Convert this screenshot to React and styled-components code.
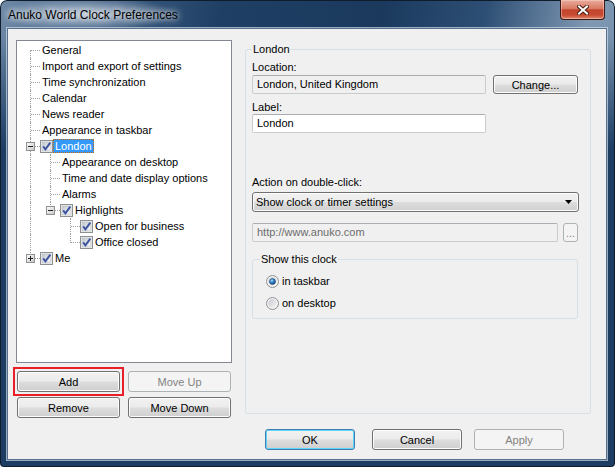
import React from 'react';
import styled, { createGlobalStyle, css } from 'styled-components';

const GlobalStyle = createGlobalStyle`
  html, body { margin: 0; padding: 0; background: #ffffff; }
  body {
    font-family: "Segoe UI", "Liberation Sans", Arial, sans-serif;
    font-size: 11px;
    color: #000;
  }
`;

const Window = styled.div`
  box-sizing: border-box;
  width: 615px;
  height: 467px;
  padding: 0 8px 7px 7px;
  display: flex;
  flex-direction: column;
  border-radius: 7px 7px 4px 4px;
  box-shadow: inset 0 0 0 1px #0e1c2c;
  background:
    radial-gradient(ellipse 115px 24px at 88px 14px, rgba(255, 255, 255, 0.6), rgba(255, 255, 255, 0) 75%),
    linear-gradient(to bottom, rgba(29, 61, 99, 0) 0, rgba(29, 61, 99, 0) 36px, #1d3d63 150px),
    linear-gradient(100deg, #6f8aa6 0%, #43648a 12%, #1f3f64 32%, #1a395d 55%, #2e4f75 70%, #8099b3 85%, #6582a0 100%);
`;

const TitleBar = styled.div`
  display: flex;
  justify-content: space-between;
  align-items: flex-start;
  height: 28px;
  flex: none;
`;

const TitleText = styled.div`
  padding: 8px 0 0 1px;
  font-size: 12px;
  line-height: 14px;
  color: #000;
  text-shadow: 0 0 6px #fff, 0 0 10px rgba(255, 255, 255, 0.8);
`;

const CloseButton = styled.div`
  box-sizing: border-box;
  width: 45px;
  height: 20px;
  margin-right: 2px;
  display: flex;
  align-items: center;
  justify-content: center;
  border: 1px solid #3d1a14;
  border-top: none;
  border-radius: 0 0 4px 4px;
  background: linear-gradient(#e9ab9d 0%, #d87a64 45%, #c2442c 52%, #c84d33 80%, #e08a70 100%);
  box-shadow: inset 0 0 0 1px rgba(255, 220, 210, 0.45);
`;

const Client = styled.div`
  flex: 1;
  display: flex;
  flex-direction: column;
  padding: 11px 0 0 8px;
  background: #f0f0f0;
  border: 1px solid #566f8c;
  box-shadow: 0 0 0 1px rgba(210, 222, 234, 0.7);
`;

const Main = styled.div`
  display: flex;
  align-items: flex-start;
  gap: 13px;
  height: 378px;
`;

const LeftColumn = styled.div`
  width: 216px;
  display: flex;
  flex-direction: column;
`;

const TreeBox = styled.div`
  box-sizing: border-box;
  height: 323px;
  background: #fff;
  border: 1px solid #828790;
  padding: 1px 0 0 3px;
  overflow: hidden;
`;

const Row = styled.div`
  display: flex;
  align-items: center;
  height: 16px;
`;

const Guide = styled.span`
  position: relative;
  flex: none;
  width: 20px;
  height: 16px;
  ${p => p.$line && css`
    &::before {
      content: '';
      position: absolute;
      left: 10px;
      top: 0;
      bottom: 0;
      border-left: 1px dotted #a0a0a0;
    }
  `}
`;

const Branch = styled.span`
  position: relative;
  flex: none;
  width: 20px;
  height: 16px;
  &::before {
    content: '';
    position: absolute;
    left: 10px;
    top: ${p => (p.$first ? '8px' : '0')};
    height: ${p => (p.$last ? (p.$first ? '0' : '9px') : p.$first ? '8px' : '16px')};
    border-left: 1px dotted #a0a0a0;
  }
  &::after {
    content: '';
    position: absolute;
    left: 11px;
    top: 8px;
    width: 9px;
    border-top: 1px dotted #a0a0a0;
  }
`;

const ExpanderSlot = styled.span`
  position: absolute;
  left: 6px;
  top: 4px;
  width: 9px;
  height: 9px;
  z-index: 1;
  display: block;
  line-height: 0;
`;

const NodeLabel = styled.span`
  padding: 0 1px;
  border: 1px dotted transparent;
  line-height: 12px;
  white-space: nowrap;
  ${p => p.$selected && css`
    background: #3399ff;
    color: #fff;
    border-color: #c86a00;
  `}
`;

const CheckSlot = styled.span`
  display: block;
  flex: none;
  width: 13px;
  height: 13px;
  line-height: 0;
`;

const ButtonGrid = styled.div`
  display: grid;
  grid-template-columns: 103px 103px;
  gap: 5px 8px;
  padding-left: 1px;
  margin-top: 8px;
`;

/* red annotation frame drawn around the Add button */
const Marker = styled.div`
  margin: -4px;
  padding: 2px;
  border: 2px solid #e81f27;
`;

const Button = styled.div`
  box-sizing: border-box;
  width: ${p => p.$w || 103}px;
  height: ${p => p.$h || 21}px;
  display: flex;
  align-items: center;
  justify-content: center;
  flex: none;
  color: #000;
  border: 1px solid #707070;
  border-radius: 3px;
  background: linear-gradient(#f2f2f2 0%, #ebebeb 48%, #dddddd 52%, #cfcfcf 100%);
  box-shadow: inset 0 0 0 1px #fcfcfc;
  ${p => p.$default && css`
    border-color: #3c7fb1;
    box-shadow: inset 0 0 0 1px #5fd3f9;
  `}
  ${p => p.$disabled && css`
    color: #838383;
    border-color: #adb2b5;
    background: #f4f4f4;
    box-shadow: none;
  `}
`;

const Group = styled.fieldset`
  box-sizing: border-box;
  margin: 0;
  min-width: 0;
  width: ${p => p.$w}px;
  height: ${p => p.$h}px;
  border: 1px solid #d5dfe5;
  border-radius: 3px;
  padding: ${p => p.$pad};
  display: flex;
  flex-direction: column;
  flex: none;
`;

const Legend = styled.legend`
  padding: 0 1px;
  line-height: 14px;
  margin-left: ${p => p.$indent || 0}px;
`;

const FieldLabel = styled.div`
  line-height: 14px;
  margin-top: ${p => p.$mt}px;
`;

const FieldRow = styled.div`
  display: flex;
  align-items: center;
  gap: ${p => p.$gap || 7}px;
  margin-top: ${p => p.$mt || 0}px;
`;

const TextBox = styled.div`
  box-sizing: border-box;
  width: ${p => p.$w}px;
  height: 19px;
  padding: 0 4px;
  line-height: 17px;
  border: 1px solid #c9cccf;
  border-top-color: #abadb3;
  border-radius: 2px;
  background: ${p => p.$bg || '#fff'};
  color: ${p => (p.$muted ? '#6d6d6d' : '#000')};
  white-space: nowrap;
  overflow: hidden;
  margin-top: ${p => p.$mt || 0}px;
`;

const Select = styled.div`
  box-sizing: border-box;
  height: 20px;
  margin-top: 3px;
  padding: 0 6px 0 3px;
  display: flex;
  align-items: center;
  justify-content: space-between;
  border: 1px solid #707070;
  border-radius: 3px;
  background: linear-gradient(#f2f2f2 0%, #ebebeb 48%, #dddddd 52%, #cfcfcf 100%);
  box-shadow: inset 0 0 0 1px #fcfcfc;
`;

const InnerGap = styled.div`
  height: 4px;
`;

const RadioRow = styled.div`
  display: flex;
  align-items: center;
  gap: 3px;
  height: 22px;
  padding-left: 3px;
`;

const Footer = styled.div`
  display: flex;
  margin-top: 11px;
  padding-left: 249px;
`;

const Spacer = styled.span`
  width: ${p => p.$w}px;
  flex: none;
`;

const CloseGlyph = () => (
  <svg width="12" height="10" viewBox="0 0 12 10">
    <path d="M2 1.5 L10 8.5 M10 1.5 L2 8.5" stroke="#4a1d14" strokeWidth="4" strokeLinecap="square" />
    <path d="M2 1.5 L10 8.5 M10 1.5 L2 8.5" stroke="#ffffff" strokeWidth="2" strokeLinecap="square" />
  </svg>
);

const CheckIcon = () => (
  <svg width="13" height="13" viewBox="0 0 13 13">
    <defs>
      <linearGradient id="cbFill" x1="0" y1="0" x2="1" y2="1">
        <stop offset="0" stopColor="#c6cad0" />
        <stop offset="1" stopColor="#f4f5f6" />
      </linearGradient>
    </defs>
    <rect x="0.5" y="0.5" width="12" height="12" fill="#f5f5f5" stroke="#8e8f8f" />
    <rect x="2" y="2" width="9" height="9" fill="url(#cbFill)" stroke="#b2b6bc" strokeWidth="0.6" />
    <path d="M3.2 6.4 L5.4 9.3 L10.3 2.6" fill="none" stroke="#3d55a0" strokeWidth="1.9" />
  </svg>
);

const ExpanderIcon = ({ open }) => (
  <svg width="9" height="9" viewBox="0 0 9 9">
    <defs>
      <linearGradient id="exFill" x1="0" y1="0" x2="1" y2="1">
        <stop offset="0" stopColor="#ffffff" />
        <stop offset="1" stopColor="#c6c6c6" />
      </linearGradient>
    </defs>
    <rect x="0.5" y="0.5" width="8" height="8" fill="url(#exFill)" stroke="#919191" />
    <path d="M2 4.5 H7" stroke="#222" strokeWidth="1" />
    {!open && <path d="M4.5 2 V7" stroke="#222" strokeWidth="1" />}
  </svg>
);

const RadioIcon = ({ checked }) => (
  <svg width="13" height="13" viewBox="0 0 13 13">
    <defs>
      <linearGradient id="rbFill" x1="0" y1="0" x2="1" y2="1">
        <stop offset="0" stopColor="#c6cad0" />
        <stop offset="1" stopColor="#f6f6f6" />
      </linearGradient>
      <radialGradient id="rbDot" cx="0.4" cy="0.35" r="0.7">
        <stop offset="0" stopColor="#b4e2fc" />
        <stop offset="0.45" stopColor="#2f80c8" />
        <stop offset="1" stopColor="#123c68" />
      </radialGradient>
    </defs>
    <circle cx="6.5" cy="6.5" r="6" fill="#f4f4f4" stroke="#8e8f8f" />
    <circle cx="6.5" cy="6.5" r="4.4" fill="url(#rbFill)" />
    {checked && <circle cx="6.5" cy="6.5" r="3" fill="url(#rbDot)" stroke="#1b4a78" strokeWidth="0.5" />}
  </svg>
);

const ArrowIcon = () => (
  <svg width="7" height="4" viewBox="0 0 7 4">
    <path d="M0 0 H7 L3.5 4 Z" fill="#000" />
  </svg>
);

const tree = [
  { label: 'General' },
  { label: 'Import and export of settings' },
  { label: 'Time synchronization' },
  { label: 'Calendar' },
  { label: 'News reader' },
  { label: 'Appearance in taskbar' },
  {
    label: 'London', check: true, selected: true, open: true, children: [
      { label: 'Appearance on desktop' },
      { label: 'Time and date display options' },
      { label: 'Alarms' },
      {
        label: 'Highlights', check: true, open: true, children: [
          { label: 'Open for business', check: true },
          { label: 'Office closed', check: true },
        ],
      },
    ],
  },
  { label: 'Me', check: true, open: false, children: [{ label: 'hidden' }] },
];

function flatten(nodes, depth = 0, guides = []) {
  const rows = [];
  nodes.forEach((node, i) => {
    const last = i === nodes.length - 1;
    rows.push({ ...node, guides, first: depth === 0 && i === 0, last, hasChildren: !!node.children });
    if (node.children && node.open) {
      rows.push(...flatten(node.children, depth + 1, [...guides, !last]));
    }
  });
  return rows;
}

const rows = flatten(tree);

const Tree = () => (
  <TreeBox>
    {rows.map((r, i) => (
      <Row key={i}>
        {r.guides.map((g, j) => <Guide key={j} $line={g} />)}
        <Branch $first={r.first} $last={r.last}>
          {r.hasChildren && (
            <ExpanderSlot><ExpanderIcon open={r.open} /></ExpanderSlot>
          )}
        </Branch>
        {r.check && <CheckSlot><CheckIcon /></CheckSlot>}
        <NodeLabel $selected={r.selected}>{r.label}</NodeLabel>
      </Row>
    ))}
  </TreeBox>
);

export default function App() {
  return (
    <>
      <GlobalStyle />
      <Window>
        <TitleBar>
          <TitleText>Anuko World Clock Preferences</TitleText>
          <CloseButton><CloseGlyph /></CloseButton>
        </TitleBar>
        <Client>
          <Main>
            <LeftColumn>
              <Tree />
              <ButtonGrid>
                <Marker><Button>Add</Button></Marker>
                <Button $disabled>Move Up</Button>
                <Button>Remove</Button>
                <Button>Move Down</Button>
              </ButtonGrid>
            </LeftColumn>
            <Group $w={346} $h={372} $pad="0 11px 0 6px" style={{ marginTop: 2 }}>
              <Legend>London</Legend>
              <FieldLabel $mt={4}>Location:</FieldLabel>
              <FieldRow $mt={1}>
                <TextBox $w={234} $bg="#f0f0f0">London, United Kingdom</TextBox>
                <Button $w={85} $h={19}>Change...</Button>
              </FieldRow>
              <FieldLabel $mt={6}>Label:</FieldLabel>
              <TextBox $w={234}>London</TextBox>
              <FieldLabel $mt={42}>Action on double-click:</FieldLabel>
              <Select>
                <span>Show clock or timer settings</span>
                <ArrowIcon />
              </Select>
              <FieldRow $mt={11} $gap={5}>
                <TextBox $w={306} $bg="#f0f0f0" $muted>http://www.anuko.com</TextBox>
                <Button $w={15} $h={19} $disabled>...</Button>
              </FieldRow>
              <Group $w={326} $h={67} $pad="0 0 3px 10px" style={{ marginTop: 10 }}>
                <Legend $indent={-3}>Show this clock</Legend>
                <InnerGap />
                <RadioRow><RadioIcon checked />in taskbar</RadioRow>
                <RadioRow><RadioIcon />on desktop</RadioRow>
              </Group>
            </Group>
          </Main>
          <Footer>
            <Button $w={90} $default>OK</Button>
            <Spacer $w={17} />
            <Button $w={90}>Cancel</Button>
            <Spacer $w={12} />
            <Button $w={90} $disabled>Apply</Button>
          </Footer>
        </Client>
      </Window>
    </>
  );
}
